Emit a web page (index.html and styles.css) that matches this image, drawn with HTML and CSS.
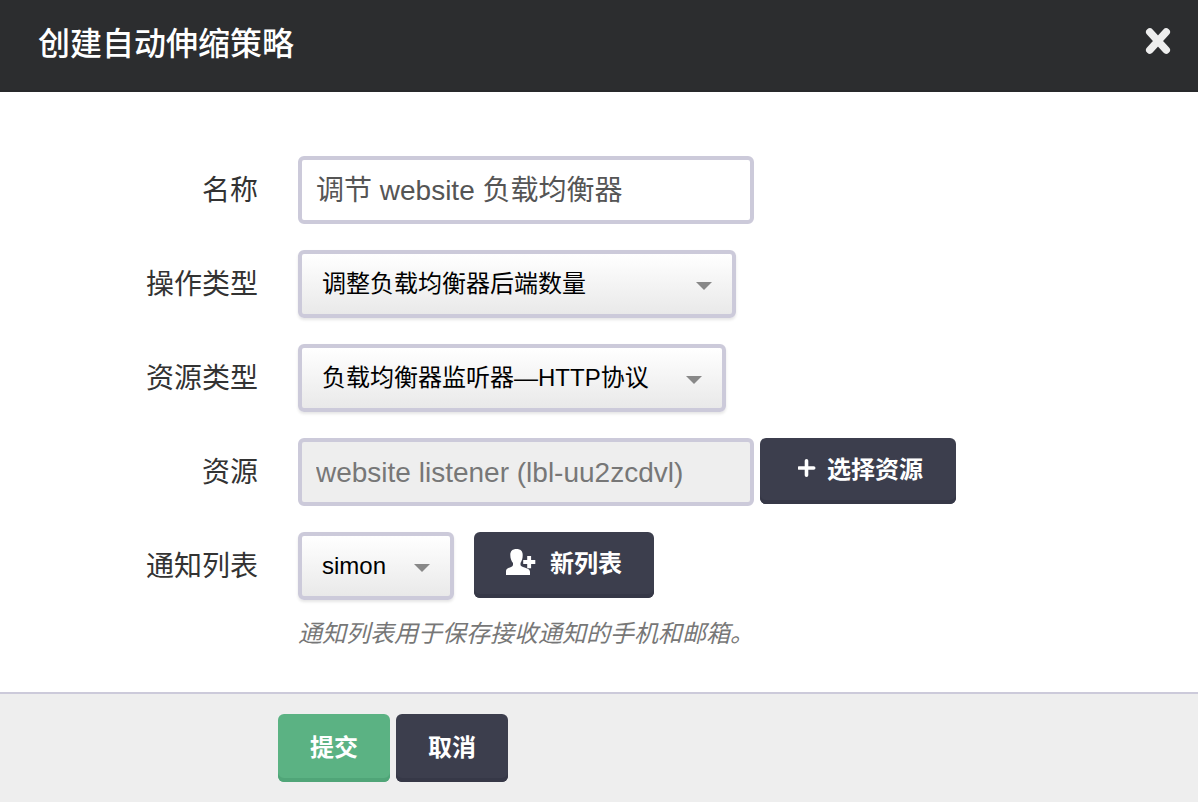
FILE: index.html
```html
<!DOCTYPE html>
<html lang="zh-CN">
<head>
<meta charset="utf-8">
<title>创建自动伸缩策略</title>
<link rel="stylesheet" href="styles.css">
</head>
<body>
<div class="modal">
  <header class="modal-header">
    <h1 class="modal-title">创建自动伸缩策略</h1>
    <button class="close" type="button" aria-label="关闭">
      <svg width="26" height="28" viewBox="0 0 26 28"><path d="M4.800 5 21.200 23M21.200 5 4.800 23" stroke="#eee" stroke-width="7.600" stroke-linecap="round"/></svg>
    </button>
  </header>
  <form class="modal-body">
    <div class="row">
      <label class="label" for="name">名称</label>
      <input class="input input-name" id="name" type="text" value="调节 website 负载均衡器">
    </div>
    <div class="row">
      <span class="label">操作类型</span>
      <button class="select select-action" type="button"><span class="select-text">调整负载均衡器后端数量</span><span class="caret"></span></button>
    </div>
    <div class="row">
      <span class="label">资源类型</span>
      <button class="select select-resource" type="button"><span class="select-text">负载均衡器监听器—HTTP协议</span><span class="caret"></span></button>
    </div>
    <div class="row">
      <label class="label" for="resource">资源</label>
      <input class="input input-readonly" id="resource" type="text" value="website listener (lbl-uu2zcdvl)" readonly>
      <button class="btn btn-pick" type="button">
        <svg class="icon-plus" width="18" height="18" viewBox="0 0 18 18"><path d="M8.500 1.800v14.400M1.300 9h14.400" stroke="#fff" stroke-width="3.600" stroke-linecap="round"/></svg>
        <span class="btn-text">选择资源</span>
      </button>
    </div>
    <div class="row">
      <span class="label">通知列表</span>
      <button class="select select-list" type="button"><span class="select-text">simon</span><span class="caret"></span></button>
      <button class="btn btn-new" type="button">
        <svg class="icon-user" width="30" height="26" viewBox="0 0 30 26"><path fill="#fff" d="M10.500 0C14.500 0 16.700 2 16.700 6c0 3.500-.8 5.800-2.200 8v1.700c0 1.200 1 1.700 2.500 2.300 4.400 1.300 7 2.200 7 5V26H0v-4c0-2 2-3 4.500-3.800C6 17.500 7 17 7 15.700V14C5.400 12 4.300 9.500 4.300 6 4.300 2 6.500 0 10.500 0Z"/><path fill="#fff" d="M21.200 7h3.900v4.100H29.300V15h-4.200v4.200h-3.900V15H17.200v-3.900h4Z"/></svg>
        <span class="btn-text">新列表</span>
      </button>
    </div>
    <p class="hint">通知列表用于保存接收通知的手机和邮箱。</p>
  </form>
  <footer class="modal-footer">
    <button class="btn btn-submit" type="button"><span class="btn-text">提交</span></button>
    <button class="btn btn-cancel" type="button"><span class="btn-text">取消</span></button>
  </footer>
</div>
</body>
</html>
```
FILE: styles.css
```css
* { box-sizing: border-box; }

body {
  margin: 0;
  background: #fff;
  font-family: "Liberation Sans", "Noto Sans CJK SC", sans-serif;
}

button, input { font-family: inherit; margin: 0; }

.modal {
  display: flex;
  flex-direction: column;
  height: 802px;
  overflow: hidden;
}

.modal-header {
  display: flex;
  justify-content: space-between;
  align-items: flex-start;
  height: 92px;
  padding: 20px 27px 0 38px;
  background: #2c2d2f;
  border-bottom: 2px solid #28292b;
}

.modal-title {
  margin: 0;
  font-size: 32px;
  line-height: 48px;
  font-weight: 500;
  color: #fff;
}

.close {
  display: block;
  padding: 7px 0 0;
  border: 0;
  background: none;
}

.close svg { display: block; }

.modal-body {
  display: flex;
  flex-direction: column;
  flex: 1;
  padding-top: 64px;
}

.row {
  display: flex;
  align-items: flex-start;
  height: 68px;
  margin-bottom: 26px;
}

.label {
  width: 258px;
  margin-right: 40px;
  text-align: right;
  font-size: 28px;
  line-height: 69px;
  color: #333;
}

.input {
  width: 456px;
  height: 68px;
  padding: 0 14px;
  border: 4px solid #cccada;
  border-radius: 6px;
  background: #fff;
  color: #555;
  font-size: 28px;
}

.input-name { padding-bottom: 5px; }

.input-readonly {
  padding-top: 2px;
  background: #eee;
  color: #777;
}

.select {
  display: flex;
  align-items: flex-start;
  justify-content: space-between;
  height: 68px;
  padding: 0 20px;
  border: 4px solid #cccada;
  border-radius: 6px;
  background: linear-gradient(#fff, #e9e9e9);
  box-shadow: 0 2px 3px rgba(0, 0, 0, .1);
  color: #000;
  font-size: 24px;
  line-height: 60px;
}

.select-action { width: 438px; }
.select-resource { width: 428px; }
.select-list { width: 156px; }

.caret {
  margin-top: 28px;
  border: 8px solid transparent;
  border-top-color: #888;
  border-bottom: 0;
}

.btn {
  display: flex;
  align-items: flex-start;
  height: 66px;
  padding: 0;
  border: 0;
  border-radius: 6px;
  background: #3c3e4d;
  box-shadow: inset 0 -4px 0 #363847;
  color: #fff;
  font-size: 24px;
  font-weight: 600;
  line-height: 64px;
}

.btn-pick { width: 196px; margin-left: 6px; padding-left: 38px; }
.btn-new { width: 180px; margin-left: 20px; padding-left: 32px; }
.icon-plus { margin: 21px 11px 0 0; }
.icon-user { margin: 17px 14px 0 0; }

.hint {
  margin: -10px 0 0 298px;
  font-size: 24px;
  line-height: 36px;
  font-style: italic;
  color: #777;
}

.modal-footer {
  display: flex;
  gap: 6px;
  height: 110px;
  padding: 20px 0 0 278px;
  border-top: 2px solid #cccada;
  background: #eee;
}

.modal-footer .btn {
  width: 112px;
  height: 68px;
  justify-content: center;
  line-height: 68px;
}

.modal-footer .btn-submit {
  background: #5bb283;
  box-shadow: inset 0 -4px 0 #50a578;
}
```
